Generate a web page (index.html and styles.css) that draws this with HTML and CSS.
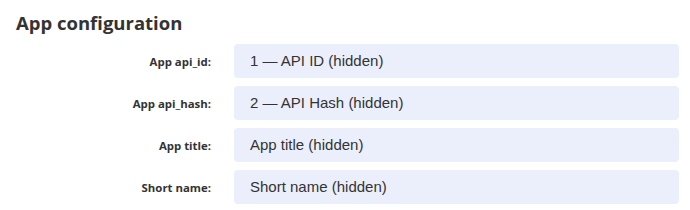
FILE: index.html
```html
<!DOCTYPE html>
<html>
<head>
    <title>App configuration</title>
    <meta name="viewport" content="width=device-width, initial-scale=1">
    <link rel="stylesheet" href="styles.css">
</head>
<body>
    <div class="panel">
        <h2>App configuration</h2>

        <div class="form-grid">
            <label class="field-label" for="api-id">App api_id:</label>
            <div class="field-value" id="api-id">1 — API ID (hidden)</div>

            <label class="field-label" for="api-hash">App api_hash:</label>
            <div class="field-value" id="api-hash">2 — API Hash (hidden)</div>

            <label class="field-label" for="app-title">App title:</label>
            <div class="field-value" id="app-title">App title (hidden)</div>

            <label class="field-label" for="short-name">Short name:</label>
            <div class="field-value" id="short-name">Short name (hidden)</div>
        </div>
    </div>
</body>
</html>
```

FILE: styles.css
```css
body {
    font-family: "Open Sans", Arial, sans-serif;
    background-color: #fff;
    color: #333;
    margin: 0;
    padding: 0;
}

.panel {
    padding: 10px 16px 6px 16px;
}

h2 {
    font-size: 18.5px;
    font-weight: bold;
    line-height: 26px;
    margin: 0 0 8px 0;
}

.form-grid {
    display: grid;
    grid-template-columns: 195px 445px;
    column-gap: 23px;
    row-gap: 8px;
    align-items: center;
}

.field-label {
    font-size: 11.4px;
    font-weight: bold;
    text-align: right;
    color: #333;
}

.field-value {
    height: 34px;
    line-height: 34px;
    padding: 0 16px;
    background-color: #ebeffc;
    border-radius: 4px;
    font-family: "Liberation Sans", Arial, sans-serif;
    font-size: 15px;
    color: #333;
}
```
